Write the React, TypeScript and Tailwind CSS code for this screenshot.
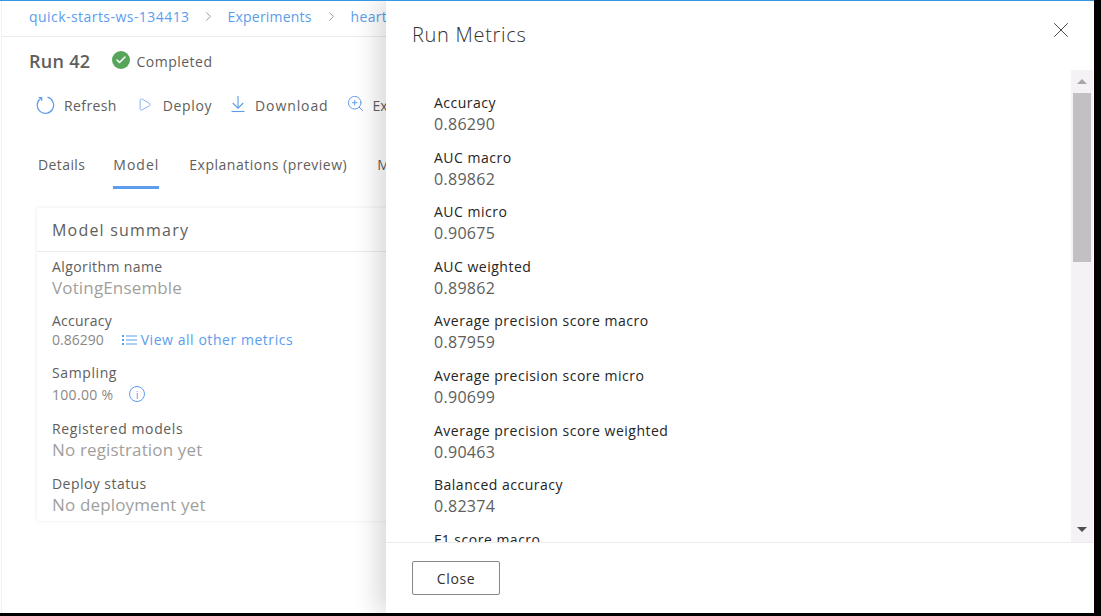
import { ChevronRight, Play, ZoomIn, X, Check } from 'lucide-react'

const metrics = [
  ['Accuracy', '0.86290'],
  ['AUC macro', '0.89862'],
  ['AUC micro', '0.90675'],
  ['AUC weighted', '0.89862'],
  ['Average precision score macro', '0.87959'],
  ['Average precision score micro', '0.90699'],
  ['Average precision score weighted', '0.90463'],
  ['Balanced accuracy', '0.82374'],
  ['F1 score macro', ''],
]

function Field({ label, value, className, track }: { label: string; value: string; className: string; track: string }) {
  return (
    <div className={className}>
      <div className={`text-[14px] leading-[21px] text-[#605e5c] ${track}`}>{label}</div>
      <div className="text-[17px] leading-[22px] tracking-[0.15px] text-[#a19f9d]">{value}</div>
    </div>
  )
}

function RefreshIcon() {
  return (
    <svg width="20" height="20" viewBox="0 0 20 20" fill="none" stroke="#5b9bea" strokeWidth="1.2" className="shrink-0">
      <path d="M6 3.2A8.2 8.2 0 1 0 12.5 2.2" />
      <path d="M3.5 2.5h3.2v3.2" />
    </svg>
  )
}

function DownloadIcon() {
  return (
    <svg width="14" height="18" viewBox="0 0 14 18" fill="none" stroke="#5b9bea" strokeWidth="1.1" className="ml-[19px] shrink-0 -translate-y-[1px]">
      <path d="M7 1v12" />
      <path d="M1.8 8l5.2 5.2L12.2 8" />
      <path d="M0.5 16.5h13" />
    </svg>
  )
}

export default function App() {
  return (
    <div className="h-screen w-full overflow-hidden bg-black pr-[7px] pb-[3px] font-['Open_Sans',sans-serif]">
      <div className="relative h-full w-full overflow-hidden border-t border-[#3a96dd] bg-white">
        {/* page behind the panel */}
        <div className="ml-[1px] h-full border-l border-[#f3f2f1]">
          <div className="flex h-[36px] items-center whitespace-nowrap border-b border-[#edebe9] pl-[27px] pb-[4px] text-[14px] text-[#5c9ded]">
            <span className="tracking-[0.45px]">quick-starts-ws-134413</span>
            <ChevronRight size={15} strokeWidth={1.2} className="ml-[11px] mr-[12px] shrink-0 text-[#777]" />
            <span className="tracking-[0.2px]">Experiments</span>
            <ChevronRight size={15} strokeWidth={1.2} className="mx-[12px] shrink-0 text-[#777]" />
            <span className="tracking-[0.3px]">heart-disease</span>
          </div>

          <div className="flex items-center pl-[27px] pt-[11px]">
            <span className="text-[18px] font-semibold leading-[26px] tracking-[0.3px] text-[#605e5c]">Run 42</span>
            <span className="ml-[22px] flex h-[18px] w-[18px] -translate-y-[1px] items-center justify-center rounded-full bg-[#57a55a]">
              <Check size={12} strokeWidth={3} className="text-white" />
            </span>
            <span className="ml-[6px] text-[14px] tracking-[0.5px] text-[#605e5c]">Completed</span>
          </div>

          <div className="mt-[15px] flex h-[32px] items-center whitespace-nowrap pl-[33px] text-[14px] text-[#605e5c]">
            <RefreshIcon />
            <span className="ml-[9px] tracking-[0.4px]">Refresh</span>
            <Play size={15} strokeWidth={1.2} className="ml-[20px] shrink-0 -translate-y-[1px] text-[#5b9bea]" />
            <span className="ml-[11px] tracking-[0.6px]">Deploy</span>
            <DownloadIcon />
            <span className="ml-[10px] tracking-[0.9px]">Download</span>
            <ZoomIn size={19} strokeWidth={1.2} className="ml-[17px] shrink-0 -translate-y-[2px] text-[#5b9bea]" />
            <span className="ml-[8px]">Explain</span>
          </div>

          <div className="mt-[28px] flex h-[42px] items-start whitespace-nowrap pl-[36px] text-[14px] text-[#605e5c]">
            <span className="leading-[32px] tracking-[0.4px]">Details</span>
            <span className="ml-[28px] h-[40px] border-b-[3px] border-[#5c9ded] leading-[32px] tracking-[1px]">Model</span>
            <span className="ml-[30px] leading-[32px] tracking-[0.5px]">Explanations (preview)</span>
            <span className="ml-[30px] leading-[32px]">Metrics</span>
          </div>

          <div className="ml-[35px] mt-[17px] h-[313px] w-[700px] shadow-[0_0_3px_rgba(0,0,0,0.1)]">
            <div className="flex h-[44px] items-center border-b border-[#edebe9] pl-[15px] text-[16px] tracking-[1.2px] text-[#605e5c]">
              Model summary
            </div>
            <div className="pl-[15px]">
              <Field label="Algorithm name" value="VotingEnsemble" className="pt-[4px]" track="tracking-[0.4px]" />
              <div className="pt-[12px]">
                <div className="text-[14px] leading-[20px] tracking-[0.25px] text-[#605e5c]">Accuracy</div>
                <div className="flex h-[17px] items-center text-[14px]">
                  <span className="text-[#8a8886]">0.86290</span>
                  <svg width="16" height="12" viewBox="0 0 16 12" className="ml-[18px] shrink-0" fill="#5c9ded">
                    <rect x="0" y="1" width="2" height="2" />
                    <rect x="0" y="5" width="2" height="2" />
                    <rect x="0" y="9" width="2" height="2" />
                    <rect x="4" y="1.5" width="11" height="1" />
                    <rect x="4" y="5.5" width="11" height="1" />
                    <rect x="4" y="9.5" width="11" height="1" />
                  </svg>
                  <span className="ml-[3px] tracking-[0.55px] text-[#5c9ded]">View all other metrics</span>
                </div>
              </div>
              <div className="pt-[14px]">
                <div className="text-[14px] leading-[21px] tracking-[0.6px] text-[#605e5c]">Sampling</div>
                <div className="flex h-[22px] items-center text-[14px] tracking-[0.3px] text-[#8a8886]">
                  <span>100.00 %</span>
                  <span className="ml-[16px] flex h-[16px] w-[16px] items-center justify-center rounded-full border border-[#5c9ded] text-[11px] leading-none text-[#5c9ded]">
                    i
                  </span>
                </div>
              </div>
              <Field label="Registered models" value="No registration yet" className="pt-[13px]" track="tracking-[0.6px]" />
              <Field label="Deploy status" value="No deployment yet" className="pt-[12px]" track="tracking-[0.45px]" />
            </div>
          </div>
        </div>

        {/* metrics side panel */}
        <div className="absolute top-0 right-0 bottom-0 flex w-[708px] flex-col bg-white shadow-[-8px_0_24px_rgba(0,0,0,0.16)]">
          <div className="flex h-[69px] shrink-0 items-start justify-between pl-[26px] pr-[20px]">
            <span className="pt-[18px] text-[20px] font-light leading-[32px] tracking-[0.7px] text-[#323130]">Run Metrics</span>
            <X size={26} strokeWidth={0.9} className="mt-[16px] text-[#444]" />
          </div>

          <div className="flex h-[472px] shrink-0 overflow-hidden">
            <div className="min-w-0 flex-1 overflow-hidden pl-[48px] pt-[22px] text-[14px]">
              {metrics.map(([name, val]) => (
                <div key={name} className="h-[54.6px]">
                  <div className="leading-[21px] tracking-[0.5px] text-[#252423]">{name}</div>
                  {val && <div className="mt-[1px] text-[16px] leading-[21px] tracking-[0.3px] text-[#605e5c]">{val}</div>}
                </div>
              ))}
            </div>
            <div className="relative mr-[1px] w-[22px] shrink-0 bg-[#f5f2f6]">
              <div className="absolute top-[9px] left-[6px] h-0 w-0 border-x-[5px] border-b-[5px] border-x-transparent border-b-[#a6a6a6]" />
              <div className="absolute top-[23px] left-[2px] h-[169px] w-[18px] bg-[#c2c0c3]" />
              <div className="absolute bottom-[10px] left-[6px] h-0 w-0 border-x-[5px] border-t-[5px] border-x-transparent border-t-[#505050]" />
            </div>
          </div>

          <div className="flex-1 border-t border-[#edebe9] pl-[26px] pt-[18px]">
            <button className="h-[34px] w-[88px] rounded-[2px] border border-[#8a8886] text-[14px] tracking-[0.6px] text-[#323130]">
              Close
            </button>
          </div>
        </div>
      </div>
    </div>
  )
}
